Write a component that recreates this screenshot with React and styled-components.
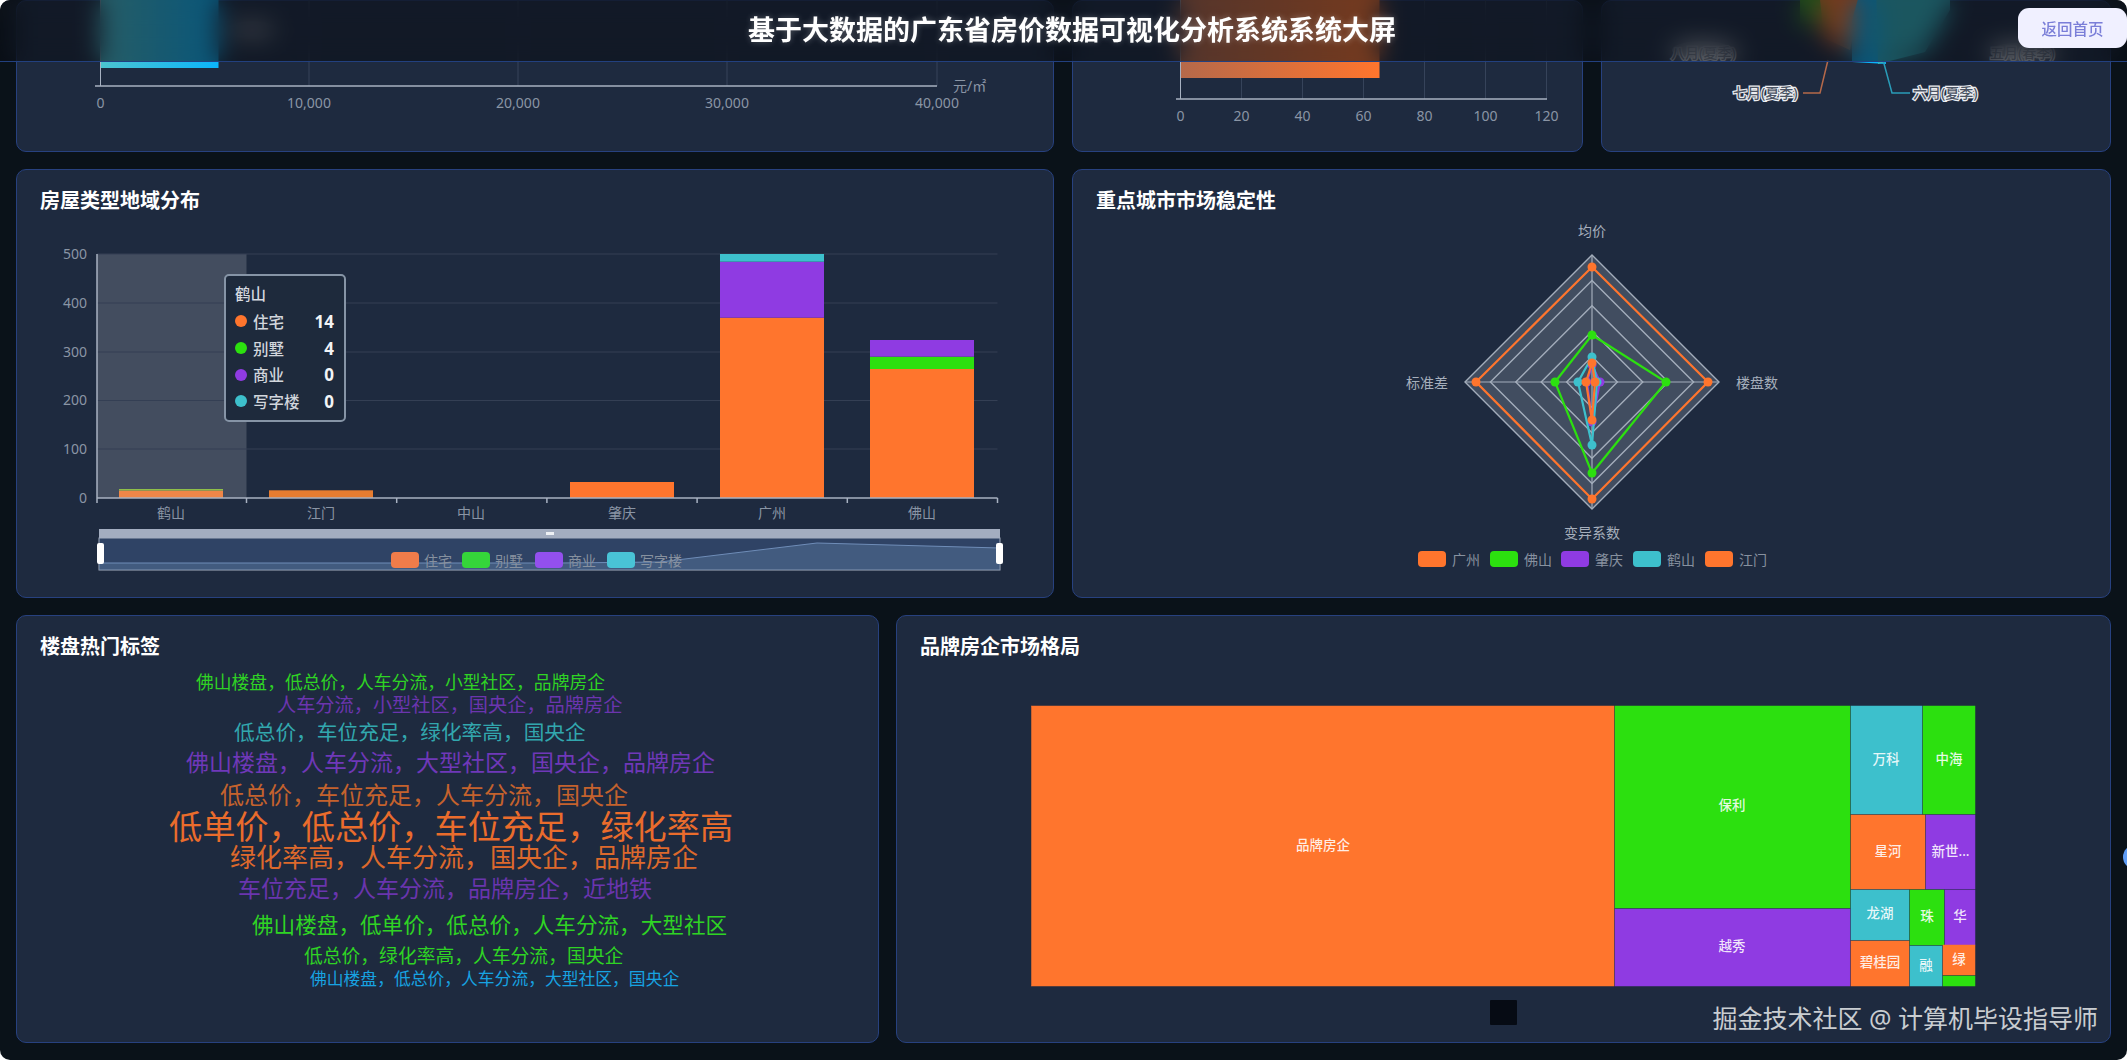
import styled, { createGlobalStyle } from 'styled-components'

const ORANGE = '#ff752d'
const GREEN = '#2ce00f'
const PURPLE = '#8f3be2'
const CYAN = '#3dc0cc'

const GlobalStyle = createGlobalStyle`
  html, body {
    margin: 0;
    background: #fff;
  }
  * {
    box-sizing: border-box;
  }
`

const Screen = styled.div`
  position: relative;
  width: 2127px;
  height: 1060px;
  overflow: hidden;
  border-radius: 10px;
  background: #0a1219;
  font-family: 'Noto Sans', 'Noto Sans CJK SC', sans-serif;
`

const Header = styled.header`
  position: absolute;
  top: 0;
  left: 0;
  right: 0;
  z-index: 3;
  height: 62px;
  padding-left: 17px;
  display: grid;
  grid-template-columns: 1fr auto 1fr;
  background: rgba(9, 12, 19, 0.56);
  backdrop-filter: blur(12px);
  border-bottom: 1px solid #22407f;
`

const HeaderTitle = styled.h1`
  grid-column: 2;
  margin: 0;
  color: #fff;
  font-size: 27px;
  font-weight: 700;
  line-height: 60px;
  white-space: nowrap;
  text-shadow: 0 0 6px rgba(255, 255, 255, 0.3);
`

const HomeButton = styled.button`
  grid-column: 3;
  justify-self: end;
  width: 109px;
  height: 40px;
  margin-top: 8px;
  border: 0;
  border-radius: 11px;
  background: #f0f0ff;
  color: #7a7ed8;
  font-family: inherit;
  font-size: 15.5px;
  font-weight: 500;
`

const Dashboard = styled.main`
  display: flex;
  flex-direction: column;
  gap: 17px;
`

const Row = styled.section`
  display: grid;
  grid-template-columns: ${(p) => p.$columns};
  justify-content: space-between;
  padding: 0 16px;
`

const Panel = styled.article`
  position: relative;
  height: ${(p) => p.$height}px;
  background: #1e2a3f;
  border: 1px solid #27417f;
  border-radius: 10px;
`

const PanelTitle = styled.h2`
  height: 58px;
  margin: 0;
  padding: 19px 0 0 23px;
  color: #fff;
  font-size: 20px;
  font-weight: 700;
  line-height: 24px;
`

const Chart = styled.svg`
  display: block;
  overflow: visible;
  font-family: 'Noto Sans', 'Noto Sans CJK SC', sans-serif;
`

const AxisLabel = styled.text`
  fill: #8a95a5;
  font-size: 14px;
  dominant-baseline: central;
  text-anchor: ${(p) => p.$anchor || 'middle'};
`

const LegendLabel = styled.text`
  fill: #87919f;
  font-size: 14px;
  dominant-baseline: central;
`

const RadarLabel = styled.text`
  fill: #a6afbc;
  font-size: 14px;
  dominant-baseline: central;
  text-anchor: middle;
`

const PieLabel = styled.text`
  fill: #4d5564;
  stroke: #eceef2;
  stroke-width: 2.4px;
  paint-order: stroke;
  font-size: 14px;
  font-weight: 500;
  dominant-baseline: central;
`

const CloudWord = styled.text`
  dominant-baseline: central;
`

const TreeLabel = styled.text`
  fill: rgba(255, 255, 255, 0.88);
  font-size: 13.5px;
  font-weight: 500;
  dominant-baseline: central;
  text-anchor: middle;
`

const Tooltip = styled.aside`
  position: absolute;
  left: 207px;
  top: 104px;
  width: 122px;
  height: 148px;
  padding: 8px 10px 5px 9px;
  background: #1e2a3c;
  border: 2px solid #8694a6;
  border-radius: 5px;
`

const TooltipTitle = styled.div`
  margin-bottom: 4px;
  color: #d6dae0;
  font-size: 15.5px;
  font-weight: 500;
  line-height: 20px;
`

const TooltipRow = styled.div`
  display: flex;
  align-items: center;
  height: 26.7px;
  color: #d2d6dc;
  font-size: 15.5px;
  font-weight: 500;
`

const TooltipDot = styled.i`
  width: 12px;
  height: 12px;
  margin-right: 6px;
  border-radius: 50%;
  background: ${(p) => p.$color};
`

const TooltipValue = styled.b`
  margin-left: auto;
  color: #f2f4f6;
  font-size: 17px;
`

const Watermark = styled.div`
  position: absolute;
  right: 29px;
  top: 999px;
  z-index: 2;
  color: #c9cdd1;
  font-size: 25px;
  line-height: 38px;
  white-space: nowrap;
`

const EdgeDot = styled.div`
  position: absolute;
  right: -20px;
  top: 845px;
  width: 24px;
  height: 24px;
  border-radius: 50%;
  background: #5f9df6;
`

const typeLegend = [
  { name: '住宅', x: 391, color: '#f07c4a' },
  { name: '别墅', x: 462, color: '#35d53a' },
  { name: '商业', x: 535, color: '#9350ee' },
  { name: '写字楼', x: 607, color: '#49c3d6' },
]

const stackBars = [
  { name: '鹤山', x: 119, parts: [[490.5, 498, '#ef8648'], [489, 490.5, '#8fbf4a']] },
  { name: '江门', x: 269, parts: [[490.3, 498, '#e67c30']] },
  { name: '中山', x: 419, parts: [] },
  { name: '肇庆', x: 570, parts: [[482, 498, ORANGE]] },
  { name: '广州', x: 720, parts: [[317.7, 498, ORANGE], [261.7, 317.7, PURPLE], [254, 261.7, CYAN]] },
  { name: '佛山', x: 870, parts: [[369, 498, ORANGE], [356.7, 369, GREEN], [340, 356.7, PURPLE]] },
]

const radarSeries = [
  { color: ORANGE, r: [115, 116, 117, 116] },
  { color: GREEN, r: [47, 74, 91, 37] },
  { color: PURPLE, r: [17, 8, 40, 5] },
  { color: CYAN, r: [25, 5, 63, 14] },
  { color: ORANGE, r: [19, 3, 38, 6] },
]

const radarLegend = [
  { name: '广州', x: 1418, color: ORANGE },
  { name: '佛山', x: 1490, color: GREEN },
  { name: '肇庆', x: 1561, color: PURPLE },
  { name: '鹤山', x: 1633, color: CYAN },
  { name: '江门', x: 1705, color: ORANGE },
]

const tags = [
  { text: '佛山楼盘，低总价，人车分流，小型社区，品牌房企', x: 196, y: 682, size: 17.8, color: '#2fd324' },
  { text: '人车分流，小型社区，国央企，品牌房企', x: 277, y: 704, size: 19.2, color: '#6b35ae' },
  { text: '低总价，车位充足，绿化率高，国央企', x: 234, y: 732, size: 20.7, color: '#32a7ae' },
  { text: '佛山楼盘，人车分流，大型社区，国央企，品牌房企', x: 186, y: 762, size: 23, color: '#6f38b8' },
  { text: '低总价，车位充足，人车分流，国央企', x: 220, y: 794, size: 24, color: '#c4622d' },
  { text: '低单价，低总价，车位充足，绿化率高', x: 169, y: 826, size: 33.2, color: '#ea6c2c' },
  { text: '绿化率高，人车分流，国央企，品牌房企', x: 230, y: 857, size: 26, color: '#dd692c' },
  { text: '车位充足，人车分流，品牌房企，近地铁', x: 238, y: 888, size: 23, color: '#6a35ae' },
  { text: '佛山楼盘，低单价，低总价，人车分流，大型社区', x: 252, y: 924, size: 21.6, color: '#2fd324' },
  { text: '低总价，绿化率高，人车分流，国央企', x: 304, y: 956, size: 18.8, color: '#2fd324' },
  { text: '佛山楼盘，低总价，人车分流，大型社区，国央企', x: 310, y: 978, size: 16.8, color: '#17a3e2' },
]

// [x0, y0, x1, y1, colour, label, labelX, labelY]
const brands = [
  [1031.5, 706, 1614, 986, ORANGE, '品牌房企', 1323, 845],
  [1615, 706, 1850, 908, GREEN, '保利', 1732, 805],
  [1615, 909, 1850, 986, PURPLE, '越秀', 1732, 946],
  [1851, 706, 1922, 814, CYAN, '万科', 1886, 759],
  [1923, 706, 1975, 814, GREEN, '中海', 1949, 759],
  [1851, 815, 1925, 889, ORANGE, '星河', 1888, 851],
  [1926, 815, 1975, 889, PURPLE, '新世...', 1950.5, 851],
  [1851, 890, 1909, 940, CYAN, '龙湖', 1880, 913],
  [1851, 941, 1909, 986, ORANGE, '碧桂园', 1880, 962],
  [1910, 890, 1944, 945, GREEN, '珠', 1927, 916],
  [1945, 890, 1975, 945, PURPLE, '华', 1960, 916],
  [1910, 946, 1942, 986, CYAN, '融', 1926, 965],
  [1943, 945, 1975, 975, ORANGE, '绿', 1959, 959],
  [1943, 976, 1975, 986, GREEN],
]

function PriceChart() {
  const ticks = [
    [100.5, '0'],
    [309, '10,000'],
    [518, '20,000'],
    [727, '30,000'],
    [937, '40,000'],
  ]
  return (
    <Chart width="1036" height="150" viewBox="17 1 1036 150">
      <defs>
        <linearGradient id="priceBar" x1="0" x2="1" y1="0" y2="0">
          <stop offset="0" stopColor="#4cc4cf" />
          <stop offset="1" stopColor="#0bb4fb" />
        </linearGradient>
      </defs>
      {ticks.map(([x, label]) => (
        <g key={label}>
          <line x1={x} x2={x} y1="0" y2="86" stroke="#36435a" />
          <AxisLabel x={x} y="102">{label}</AxisLabel>
        </g>
      ))}
      <rect x="100.5" y="-20" width="118" height="88" fill="url(#priceBar)" />
      <ellipse cx="252" cy="30" rx="24" ry="9" fill="#6f7680" />
      <line x1="100.5" x2="100.5" y1="0" y2="86" stroke="#a8b2c2" />
      <line x1="95" x2="937" y1="86" y2="86" stroke="#a8b2c2" strokeWidth="1.5" />
      <AxisLabel x="953" y="85" $anchor="start">元/㎡</AxisLabel>
    </Chart>
  )
}

function ScoreChart() {
  const ticks = [0, 20, 40, 60, 80, 100, 120]
  return (
    <Chart width="509" height="150" viewBox="1073 1 509 150">
      <defs>
        <linearGradient id="scoreBar" x1="0" x2="1" y1="0" y2="0">
          <stop offset="0" stopColor="#b5694a" />
          <stop offset="1" stopColor="#ff752d" />
        </linearGradient>
      </defs>
      {ticks.map((t, i) => (
        <g key={t}>
          <line x1={1180.5 + i * 61} x2={1180.5 + i * 61} y1="0" y2="99" stroke="#36435a" />
          <AxisLabel x={1180.5 + i * 61} y="115">{t}</AxisLabel>
        </g>
      ))}
      <rect x="1180.5" y="-20" width="199" height="98" fill="url(#scoreBar)" />
      <line x1="1180.5" x2="1180.5" y1="0" y2="99" stroke="#a8b2c2" />
      <line x1="1176" x2="1547" y1="99" y2="99" stroke="#a8b2c2" strokeWidth="1.5" />
    </Chart>
  )
}

function SeasonChart() {
  return (
    <Chart width="508" height="150" viewBox="1602 1 508 150">
      <path d="M1875 -60 L1800 -60 L1800 24 L1826 24 Z" fill="#3fa320" />
      <path d="M1875 -60 L1818 -20 L1824 38 L1850 50 L1856 20 Z" fill="#ff752d" />
      <path d="M1875 -60 L1852 20 L1852 62 L1886 64 L1880 -60 Z" fill="#0bb4fb" />
      <path d="M1875 -60 L1878 64 L1925 52 L1950 10 L1950 -60 Z" fill="#33b4c0" />
      <ellipse cx="1702" cy="50" rx="30" ry="9" fill="#7d838a" />
      <ellipse cx="2016" cy="52" rx="26" ry="9" fill="#7d838a" />
      <PieLabel x="1671" y="52">八月(夏季)</PieLabel>
      <PieLabel x="1990" y="52">五月(春季)</PieLabel>
      <polyline points="1828,60 1820,93 1803,93" fill="none" stroke="#b5694a" strokeWidth="1.5" />
      <polyline points="1883,60 1892,93 1910,93" fill="none" stroke="#2a9cb8" strokeWidth="1.5" />
      <PieLabel x="1733" y="92">七月(夏季)</PieLabel>
      <PieLabel x="1913" y="92">六月(夏季)</PieLabel>
    </Chart>
  )
}

function TypeChart() {
  const grid = [254, 303, 352, 400.5, 449]
  const yLabels = [[254, 500], [303, 400], [352, 300], [400.5, 200], [449, 100], [498, 0]]
  return (
    <Chart width="1036" height="369" viewBox="17 228 1036 369">
      <rect x="97" y="254" width="149.5" height="244" fill="#fff" opacity="0.17" />
      {grid.map((y) => (
        <line key={y} x1="97" x2="997.5" y1={y} y2={y} stroke="#343f54" />
      ))}
      {yLabels.map(([y, label]) => (
        <AxisLabel key={label} x="87" y={y - 1} $anchor="end">{label}</AxisLabel>
      ))}
      {stackBars.map((bar) =>
        bar.parts.map(([top, bottom, color]) => (
          <rect key={bar.name + top} x={bar.x} y={top} width="104" height={bottom - top} fill={color} />
        ))
      )}
      <line x1="97" x2="97" y1="254" y2="503" stroke="#a8b2c2" strokeWidth="1.5" />
      <line x1="97" x2="997.5" y1="498" y2="498" stroke="#a8b2c2" strokeWidth="1.5" />
      {stackBars.map((bar, i) => (
        <g key={bar.name}>
          <line x1={246.5 + i * 150.2} x2={246.5 + i * 150.2} y1="498" y2="503" stroke="#a8b2c2" strokeWidth="1.5" />
          <AxisLabel x={bar.x + 52} y="512">{bar.name}</AxisLabel>
        </g>
      ))}

      <rect x="99" y="529" width="901" height="9" fill="#a3adc0" />
      <rect x="99" y="538" width="901" height="32" fill="#2f4365" stroke="#a3adc0" strokeWidth="1" />
      <path d="M99 563 L560 563 L660 562 L817 543 L1000 548 L1000 570 L99 570 Z" fill="#5b7aa0" opacity="0.45" />
      <polyline points="99,563 560,563 660,562 817,543 1000,548" fill="none" stroke="#6f8db8" />
      <rect x="546" y="532" width="8" height="3" fill="#eef1f5" />
      <rect x="97" y="543" width="7" height="21" rx="2" fill="#fff" />
      <rect x="996" y="543" width="7" height="21" rx="2" fill="#fff" />

      {typeLegend.map((item) => (
        <g key={item.name}>
          <rect x={item.x} y="552" width="28" height="16" rx="4" fill={item.color} />
          <LegendLabel x={item.x + 33} y="560">{item.name}</LegendLabel>
        </g>
      ))}
    </Chart>
  )
}

function radarPoints(r, cx = 1592, cy = 382) {
  return [
    [cx, cy - r[0]],
    [cx + r[1], cy],
    [cx, cy + r[2]],
    [cx - r[3], cy],
  ]
}

function RadarChart() {
  const rings = [127, 101.6, 76.2, 50.8, 25.4]
  return (
    <Chart width="1037" height="369" viewBox="1073 228 1037 369">
      <polygon points={radarPoints([127, 127, 127, 127]).join(' ')} fill="#414d60" />
      {rings.map((ring) => (
        <polygon
          key={ring}
          points={radarPoints([ring, ring, ring, ring]).join(' ')}
          fill="none"
          stroke="#a3adbb"
          strokeWidth="1.4"
        />
      ))}
      <line x1="1465" x2="1719" y1="382" y2="382" stroke="#a3adbb" strokeWidth="1.2" />
      <line x1="1592" x2="1592" y1="255" y2="509" stroke="#a3adbb" strokeWidth="1.2" />
      {radarSeries.map((series, i) => (
        <g key={i}>
          <polygon
            points={radarPoints(series.r).join(' ')}
            fill="none"
            stroke={series.color}
            strokeWidth="2.2"
          />
          {radarPoints(series.r).map(([x, y]) => (
            <circle key={`${x}-${y}`} cx={x} cy={y} r="4.5" fill={series.color} />
          ))}
        </g>
      ))}
      <RadarLabel x="1592" y="230">均价</RadarLabel>
      <RadarLabel x="1757" y="382">楼盘数</RadarLabel>
      <RadarLabel x="1592" y="532">变异系数</RadarLabel>
      <RadarLabel x="1427" y="382">标准差</RadarLabel>
      {radarLegend.map((item) => (
        <g key={item.name}>
          <rect x={item.x} y="551" width="28" height="16" rx="4" fill={item.color} />
          <LegendLabel x={item.x + 34} y="559">{item.name}</LegendLabel>
        </g>
      ))}
    </Chart>
  )
}

function TagCloud() {
  return (
    <Chart width="861" height="368" viewBox="17 674 861 368">
      {tags.map((tag) => (
        <CloudWord key={tag.y} x={tag.x} y={tag.y} fontSize={tag.size} fill={tag.color}>
          {tag.text}
        </CloudWord>
      ))}
    </Chart>
  )
}

function BrandTreemap() {
  return (
    <Chart width="1213" height="368" viewBox="897 674 1213 368">
      {brands.map(([x0, y0, x1, y1, color, label, lx, ly]) => (
        <g key={`${x0}-${y0}`}>
          <rect x={x0} y={y0} width={x1 - x0} height={y1 - y0} fill={color} stroke={color} strokeWidth="0.5" />
          {label && <TreeLabel x={lx} y={ly}>{label}</TreeLabel>}
        </g>
      ))}
      <rect x="1490" y="1000" width="27" height="25" rx="1" fill="#060b14" />
    </Chart>
  )
}

export default function App() {
  return (
    <>
      <GlobalStyle />
      <Screen>
        <Header>
          <HeaderTitle>基于大数据的广东省房价数据可视化分析系统系统大屏</HeaderTitle>
          <HomeButton>返回首页</HomeButton>
        </Header>
        <Dashboard>
          <Row $columns="1038px 511px 510px">
            <Panel $height={152}><PriceChart /></Panel>
            <Panel $height={152}><ScoreChart /></Panel>
            <Panel $height={152}><SeasonChart /></Panel>
          </Row>
          <Row $columns="1038px 1039px">
            <Panel $height={429}>
              <PanelTitle>房屋类型地域分布</PanelTitle>
              <TypeChart />
              <Tooltip>
                <TooltipTitle>鹤山</TooltipTitle>
                <TooltipRow><TooltipDot $color={ORANGE} />住宅<TooltipValue>14</TooltipValue></TooltipRow>
                <TooltipRow><TooltipDot $color={GREEN} />别墅<TooltipValue>4</TooltipValue></TooltipRow>
                <TooltipRow><TooltipDot $color={PURPLE} />商业<TooltipValue>0</TooltipValue></TooltipRow>
                <TooltipRow><TooltipDot $color={CYAN} />写字楼<TooltipValue>0</TooltipValue></TooltipRow>
              </Tooltip>
            </Panel>
            <Panel $height={429}>
              <PanelTitle>重点城市市场稳定性</PanelTitle>
              <RadarChart />
            </Panel>
          </Row>
          <Row $columns="863px 1215px">
            <Panel $height={428}>
              <PanelTitle>楼盘热门标签</PanelTitle>
              <TagCloud />
            </Panel>
            <Panel $height={428}>
              <PanelTitle>品牌房企市场格局</PanelTitle>
              <BrandTreemap />
            </Panel>
          </Row>
        </Dashboard>
        <Watermark>掘金技术社区 @ 计算机毕设指导师</Watermark>
        <EdgeDot />
      </Screen>
    </>
  )
}
